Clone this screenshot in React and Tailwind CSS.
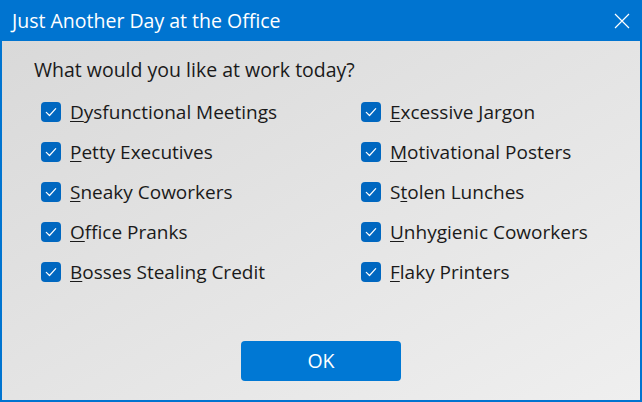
import React from "react";

const left = [
  ["D", "ysfunctional Meetings"],
  ["P", "etty Executives"],
  ["S", "neaky Coworkers"],
  ["O", "ffice Pranks"],
  ["B", "osses Stealing Credit"],
];
const right = [
  ["E", "xcessive Jargon"],
  ["M", "otivational Posters"],
  ["S", "t", "olen Lunches"],
  ["U", "nhygienic Coworkers"],
  ["F", "laky Printers"],
];

function Check({ item }) {
  // item: [accessKey, rest] or [prefix, accessKey, rest]
  const label =
    item.length === 3 ? (
      <>
        {item[0]}
        <u className="underline-offset-2">{item[1]}</u>
        {item[2]}
      </>
    ) : (
      <>
        <u className="underline-offset-2">{item[0]}</u>
        {item[1]}
      </>
    );
  return (
    <div className="flex items-center h-10 gap-[9px]">
      <div className="w-5 h-5 rounded-[4px] bg-[#0067c0] flex items-center justify-center">
        <svg width="14" height="14" viewBox="0 0 14 14" fill="none">
          <path d="M2.3 7.3 L5.5 10.5 L11.7 3.6" stroke="white" strokeWidth="1.2" strokeLinecap="round" strokeLinejoin="round" />
        </svg>
      </div>
      <span className="text-[19px] text-[#1a1a1a]">{label}</span>
    </div>
  );
}

export default function App() {
  return (
    <div
      className="w-[642px] h-[402px] flex flex-col overflow-hidden"
      style={{ fontFamily: '"Open Sans", "Noto Sans", sans-serif' }}
    >
      <div className="h-[41px] bg-[#0074d0] flex items-center justify-between pl-3 pr-[12px] shrink-0">
        <span className="text-white text-[19.5px]">Just Another Day at the Office</span>
        <svg width="16" height="16" viewBox="0 0 16 16">
          <path d="M1 1 L15 15 M15 1 L1 15" stroke="white" strokeWidth="1.2" />
        </svg>
      </div>
      <div className="flex-1 flex flex-col border-x-2 border-b-2 border-[#0074d0] bg-gradient-to-br from-[#d9d9d9] to-[#efefef]">
        <div className="pl-[32px] pt-[14px] text-[19.5px] text-[#1a1a1a]">What would you like at work today?</div>
        <div className="flex pl-[39px] pt-[8px]">
          <div className="w-[320px] flex flex-col">
            {left.map((it, i) => (
              <Check key={i} item={it} />
            ))}
          </div>
          <div className="flex flex-col">
            {right.map((it, i) => (
              <Check key={i} item={it} />
            ))}
          </div>
        </div>
        <div className="flex-1 flex items-end justify-center pb-[19px]">
          <button className="w-[160px] h-[40px] rounded-[4px] bg-[#0078d4] text-white text-[19.5px]">OK</button>
        </div>
      </div>
    </div>
  );
}
